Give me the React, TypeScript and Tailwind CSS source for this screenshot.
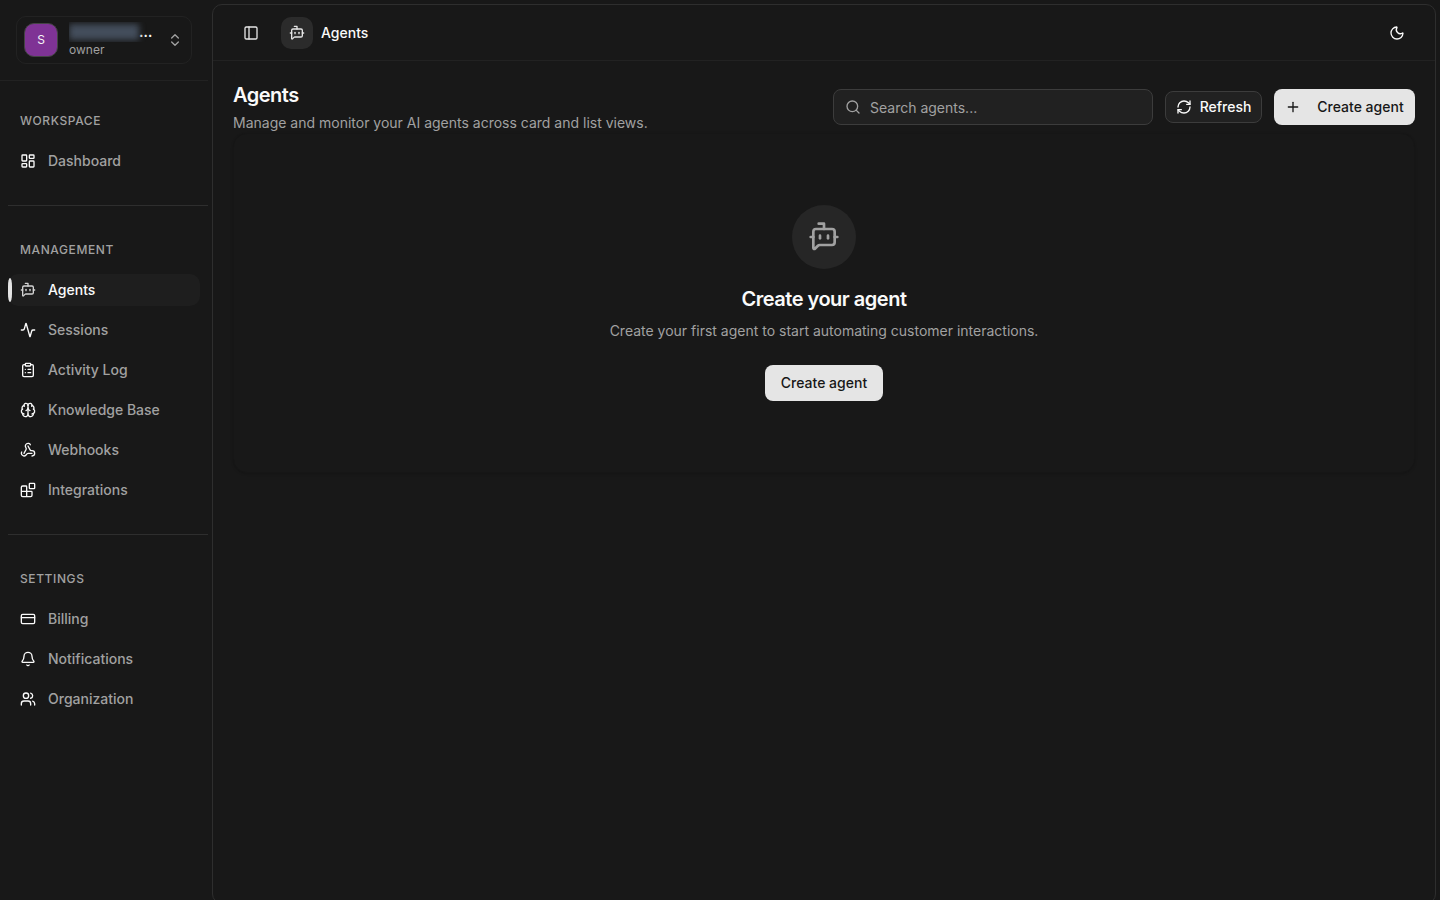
import React from 'react';
import {
  Activity,
  Bell,
  Blocks,
  BotMessageSquare,
  Brain,
  ChevronsUpDown,
  ClipboardList,
  CreditCard,
  LayoutDashboard,
  Moon,
  PanelLeft,
  Plus,
  RefreshCw,
  Search,
  Users,
  Webhook,
  type LucideIcon,
} from 'lucide-react';

interface NavItem {
  label: string;
  icon: LucideIcon;
  active?: boolean;
}

interface NavSection {
  title: string;
  items: NavItem[];
}

const sections: NavSection[] = [
  {
    title: 'Workspace',
    items: [{ label: 'Dashboard', icon: LayoutDashboard }],
  },
  {
    title: 'Management',
    items: [
      { label: 'Agents', icon: BotMessageSquare, active: true },
      { label: 'Sessions', icon: Activity },
      { label: 'Activity Log', icon: ClipboardList },
      { label: 'Knowledge Base', icon: Brain },
      { label: 'Webhooks', icon: Webhook },
      { label: 'Integrations', icon: Blocks },
    ],
  },
  {
    title: 'Settings',
    items: [
      { label: 'Billing', icon: CreditCard },
      { label: 'Notifications', icon: Bell },
      { label: 'Organization', icon: Users },
    ],
  },
];

const OrgSwitcher: React.FC = () => (
  <div className="border-b border-[#222222] p-4">
    <button
      type="button"
      aria-label="Switch organization"
      className="flex h-12 w-full items-center rounded-[10px] border border-[#222222] pl-[7px] pr-2 text-left"
    >
      <span className="flex size-[34px] shrink-0 items-center justify-center rounded-[10px] border border-[#444444] bg-[#7f3395] text-xs text-neutral-100">
        S
      </span>
      <span className="ml-[11px] flex min-w-0 flex-1 flex-col">
        <span className="flex h-5 items-center overflow-hidden">
          {/* Redacted organization name */}
          <span className="h-4 w-[70px] shrink-0 bg-[#434d5b] blur-[3px]" />
          <span className="text-sm leading-5 font-semibold text-neutral-50">…</span>
        </span>
        <span className="text-xs leading-4 text-[#a1a1a1]">owner</span>
      </span>
      <ChevronsUpDown className="size-4 shrink-0 text-[#a1a1a1]" />
    </button>
  </div>
);

const NavLink: React.FC<{ item: NavItem }> = ({ item }) => {
  const Icon = item.icon;
  return (
    <li>
      <a
        href="#"
        aria-current={item.active ? 'page' : undefined}
        className={`relative flex h-8 items-center gap-3 rounded-[10px] px-3 text-sm font-medium ${
          item.active ? 'bg-[#1e1e1e] text-neutral-50' : 'text-[#a1a1a1]'
        }`}
      >
        {item.active && (
          <span className="absolute left-0 top-1 h-6 w-1 rounded-[2px/8px] bg-[#e5e5e5]" />
        )}
        <Icon
          className={`size-4 shrink-0 ${item.active ? 'text-[#d4d4d4]' : 'text-neutral-50'}`}
        />
        {item.label}
      </a>
    </li>
  );
};

const Sidebar: React.FC = () => (
  <aside className="w-52 shrink-0">
    <OrgSwitcher />
    <nav className="pl-2 pt-6">
      {sections.map((section, idx) => (
        <div
          key={section.title}
          className={idx > 0 ? 'mt-7 border-t border-[#2e2e2e] pt-7' : ''}
        >
          <h2 className="mb-2 flex h-8 items-center px-3 text-xs font-medium uppercase tracking-wider text-[#a1a1a1]">
            {section.title}
          </h2>
          <ul className="mr-2 flex flex-col gap-2">
            {section.items.map((item) => (
              <NavLink key={item.label} item={item} />
            ))}
          </ul>
        </div>
      ))}
    </nav>
  </aside>
);

const TopBar: React.FC = () => (
  <header className="flex h-14 items-center border-b border-[#222222] px-5">
    <button
      type="button"
      aria-label="Toggle sidebar"
      className="mr-3 flex size-9 items-center justify-center rounded-lg"
    >
      <PanelLeft className="size-4 text-[#e5e5e5]" />
    </button>
    <span className="mr-2 flex size-8 items-center justify-center rounded-[10px] bg-[#2b2b2b]">
      <BotMessageSquare className="size-4 text-[#e5e5e5]" />
    </span>
    <span className="text-sm font-medium">Agents</span>
    <button
      type="button"
      aria-label="Toggle theme"
      className="ml-auto flex size-9 items-center justify-center rounded-lg"
    >
      <Moon className="size-4" />
    </button>
  </header>
);

const EmptyState: React.FC = () => (
  <section className="rounded-[14px] p-6 shadow-sm ring-1 ring-inset ring-[#161616]">
    <div className="flex flex-col items-center py-12 text-center">
      <div className="mb-4 flex size-16 items-center justify-center rounded-full bg-[#262626]">
        <BotMessageSquare className="size-8 text-[#a1a1a1]" />
      </div>
      <h2 className="mb-2 text-xl font-semibold tracking-tight">Create your agent</h2>
      <p className="mb-6 text-sm text-[#a1a1a1]">
        Create your first agent to start automating customer interactions.
      </p>
      <button
        type="button"
        className="h-9 rounded-lg bg-[#e5e5e5] px-4 text-sm font-medium text-[#171717]"
      >
        Create agent
      </button>
    </div>
  </section>
);

const App: React.FC = () => {
  return (
    <div className="flex h-screen overflow-hidden bg-[#181818] font-['Inter',sans-serif] text-neutral-50">
      <Sidebar />
      <main className="mx-1 mt-1 h-screen min-w-0 flex-1 rounded-[10px] border border-[#2e2e2e]">
        <TopBar />
        <div className="p-5">
          <div className="flex items-center gap-3">
            <div className="mr-auto">
              <h1 className="mb-1 text-xl font-semibold tracking-tight">Agents</h1>
              <p className="text-sm text-[#a1a1a1]">
                Manage and monitor your AI agents across card and list views.
              </p>
            </div>
            <label htmlFor="agent-search" className="relative w-80">
              <Search className="absolute left-3 top-[10px] size-4 text-[#a1a1a1]" />
              <input
                id="agent-search"
                type="search"
                aria-label="Search agents"
                placeholder="Search agents..."
                className="h-9 w-full rounded-lg border border-[#3c3c3c] bg-[#212121] pl-9 pr-3 text-sm placeholder:text-[#a1a1a1]"
              />
            </label>
            <button
              type="button"
              className="flex h-8 w-[97px] items-center justify-center gap-2 rounded-lg border border-[#3c3c3c] bg-[#212121] text-sm font-medium"
            >
              <RefreshCw className="size-4" />
              Refresh
            </button>
            <button
              type="button"
              className="flex h-9 w-[141px] items-center justify-center gap-4 rounded-lg bg-[#e5e5e5] text-sm font-medium text-[#171717]"
            >
              <Plus className="size-4" />
              Create agent
            </button>
          </div>
          <EmptyState />
        </div>
      </main>
    </div>
  );
};

export default App;
